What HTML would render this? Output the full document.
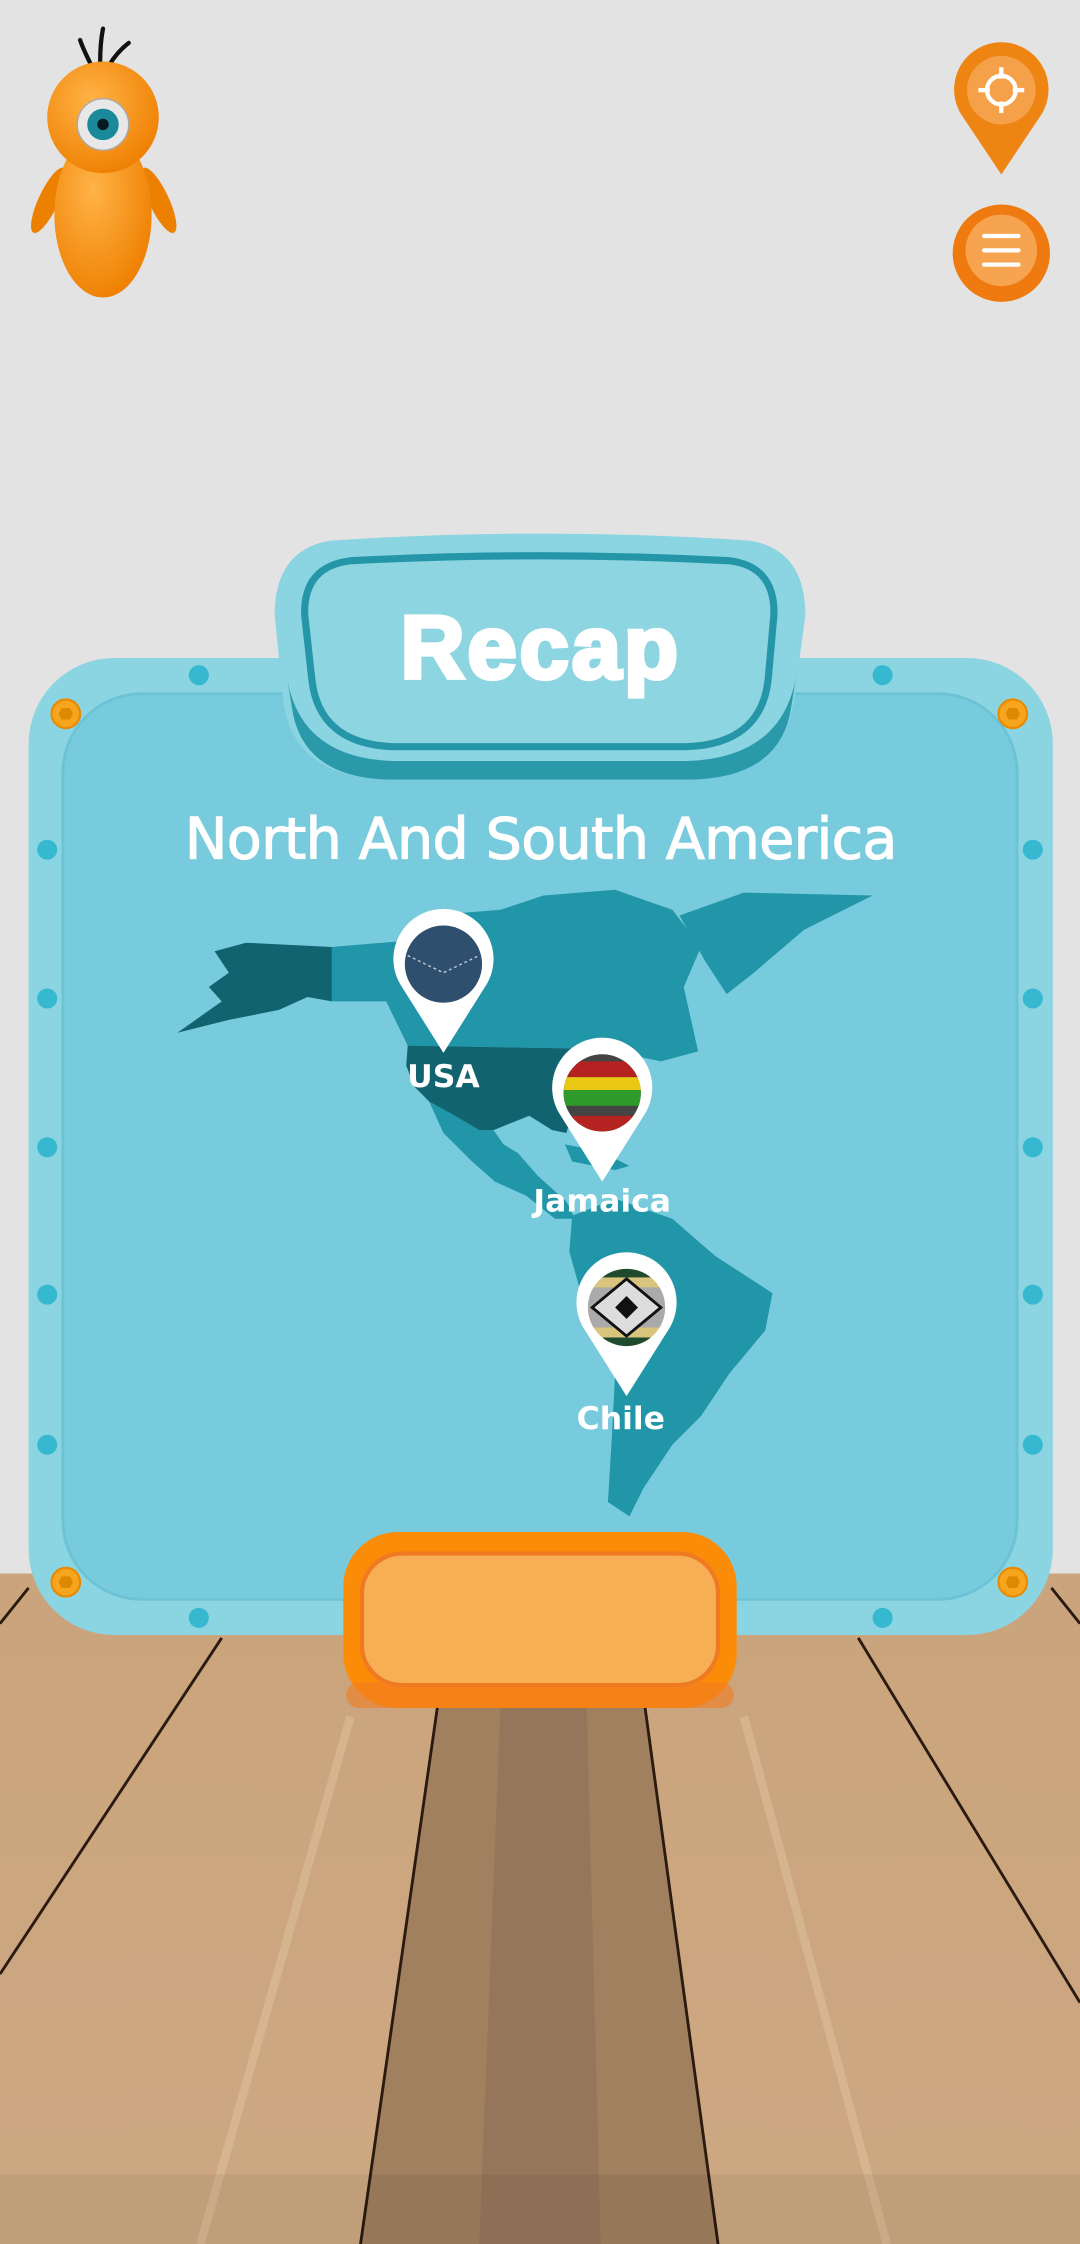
<!DOCTYPE html>
<html><head><meta charset="utf-8"><style>
html,body{margin:0;padding:0;background:#e4e4e4;}
svg{display:block}
</style></head><body>
<svg width="1080" height="2244" viewBox="0 0 755 1568.7" preserveAspectRatio="none" xmlns="http://www.w3.org/2000/svg">
<defs>
<linearGradient id="wood" x1="0" y1="0" x2="0" y2="1"><stop offset="0" stop-color="#c9a47c"/><stop offset="1" stop-color="#cda882"/></linearGradient>
<radialGradient id="orb" cx="0.4" cy="0.35" r="0.7"><stop offset="0" stop-color="#ffb347"/><stop offset="1" stop-color="#ee7f00"/></radialGradient>
<clipPath id="c1"><circle cx="310" cy="674" r="27"/></clipPath>
<clipPath id="c2"><circle cx="421" cy="764" r="27"/></clipPath>
<clipPath id="c3"><circle cx="438" cy="914" r="27"/></clipPath>
</defs>
<rect x="0" y="0" width="755" height="1100" fill="#e3e3e3"/>
<rect x="0" y="1100" width="755" height="469" fill="url(#wood)"/>
<polygon points="312,1150 445,1150 502,1569 252,1569" fill="#a0805f"/>
<polygon points="350,1190 410,1190 420,1569 335,1569" fill="#8d7058" opacity="0.6"/>
<g stroke="#2a1a10" stroke-width="2" fill="none">
<line x1="155" y1="1145" x2="0" y2="1380"/>
<line x1="312" y1="1150" x2="252" y2="1569"/>
<line x1="445" y1="1150" x2="502" y2="1569"/>
<line x1="600" y1="1145" x2="755" y2="1400"/>
<line x1="20" y1="1110" x2="0" y2="1135"/>
<line x1="735" y1="1110" x2="755" y2="1135"/>
</g>
<g stroke="#e0c4a0" stroke-width="6" opacity="0.5" fill="none">
<line x1="245" y1="1200" x2="140" y2="1569"/>
<line x1="520" y1="1200" x2="620" y2="1569"/>
</g>
<rect x="0" y="1520" width="755" height="49" fill="#000" opacity="0.06"/>

<g>
<path d="M64 46 Q58 34 56 28" stroke="#111" stroke-width="3" fill="none" stroke-linecap="round"/>
<path d="M70 44 Q70 30 72 20" stroke="#111" stroke-width="3" fill="none" stroke-linecap="round"/>
<path d="M76 46 Q82 36 90 30" stroke="#111" stroke-width="3" fill="none" stroke-linecap="round"/>
<ellipse cx="34" cy="140" rx="7" ry="25" transform="rotate(25 34 140)" fill="#ec8000"/>
<ellipse cx="111" cy="140" rx="7" ry="25" transform="rotate(-25 111 140)" fill="#ec8000"/>
<ellipse cx="72" cy="150" rx="34" ry="58" fill="url(#orb)"/>
<circle cx="72" cy="82" r="39" fill="url(#orb)"/>
<circle cx="72" cy="87" r="18" fill="#e8e8e8" stroke="#aaa" stroke-width="1"/>
<circle cx="72" cy="87" r="11" fill="#1a8a9a"/>
<circle cx="72" cy="87" r="4" fill="#0a1a20"/>
</g>

<path d="M700 122 L672 80 A33 33 0 1 1 728 80 Z" fill="#ee8411"/>
<circle cx="700" cy="63" r="24" fill="#f5a14a"/>
<circle cx="700" cy="63" r="10" fill="none" stroke="#fff" stroke-width="3"/>
<g stroke="#fff" stroke-width="3"><line x1="700" y1="47" x2="700" y2="55"/><line x1="700" y1="71" x2="700" y2="79"/><line x1="684" y1="63" x2="692" y2="63"/><line x1="708" y1="63" x2="716" y2="63"/></g>
<circle cx="700" cy="177" r="34" fill="#ee7a10"/>
<circle cx="700" cy="175" r="25" fill="#f6a450"/>
<g stroke="#fff" stroke-width="3" stroke-linecap="round"><line x1="688" y1="165" x2="712" y2="165"/><line x1="688" y1="175" x2="712" y2="175"/><line x1="688" y1="185" x2="712" y2="185"/></g>

<rect x="20" y="460" width="716" height="683" rx="60" fill="#8bd4e1"/>
<rect x="44" y="485" width="667" height="633" rx="55" fill="#77cbdc" stroke="#6cc3d5" stroke-width="2"/>
<g fill="#35b8d0">
<ellipse cx="139" cy="472" rx="7" ry="7"/><ellipse cx="617" cy="472" rx="7" ry="7"/>
<ellipse cx="139" cy="1131" rx="7" ry="7"/><ellipse cx="617" cy="1131" rx="7" ry="7"/>
<circle cx="33" cy="594" r="7"/><circle cx="33" cy="698" r="7"/><circle cx="33" cy="802" r="7"/><circle cx="33" cy="905" r="7"/><circle cx="33" cy="1010" r="7"/>
<circle cx="722" cy="594" r="7"/><circle cx="722" cy="698" r="7"/><circle cx="722" cy="802" r="7"/><circle cx="722" cy="905" r="7"/><circle cx="722" cy="1010" r="7"/>
</g>
<g fill="#f7a51c" stroke="#e98a00" stroke-width="1.5">
<circle cx="46" cy="499" r="10"/><circle cx="708" cy="499" r="10"/><circle cx="46" cy="1106" r="10"/><circle cx="708" cy="1106" r="10"/>
</g>
<g fill="#dd8a00"><polygon points="43,495 49,495 51,499 49,503 43,503 41,499"/><polygon points="705,495 711,495 713,499 711,503 705,503 703,499"/><polygon points="43,1102 49,1102 51,1106 49,1110 43,1110 41,1106"/><polygon points="705,1102 711,1102 713,1106 711,1110 705,1110 703,1106"/></g>

<path d="M230 378 Q378 368 525 378 Q563 385 563 430 L555 490 Q545 545 480 545 L275 545 Q205 545 198 490 L192 430 Q192 385 230 378 Z" fill="#8bd4e1"/>
<path d="M200 470 L205 500 Q215 545 275 545 L480 545 Q545 545 553 495 L557 470 Q548 530 480 532 L275 532 Q208 530 200 470Z" fill="#2a9aab"/>
<path d="M245 392 Q378 385 510 392 Q542 396 541 430 L537 475 Q532 520 480 522 L275 522 Q223 520 218 475 L213 430 Q212 396 245 392 Z" fill="#8dd5e0" stroke="#2596a8" stroke-width="5"/>
<text x="378" y="474" text-anchor="middle" font-family="Liberation Sans, sans-serif" font-weight="900" font-size="62" fill="#fff" stroke="#fff" stroke-width="3" letter-spacing="2">Recap</text>

<text x="378" y="600" text-anchor="middle" font-family="DejaVu Sans, Liberation Sans, sans-serif" font-size="40" fill="#fff" stroke="#fff" stroke-width="0.8" letter-spacing="-0.5">North And South America</text>

<g fill="#2096a8">
<polygon points="232,662 280,658 300,640 350,636 380,626 430,622 470,636 490,662 478,690 488,735 462,742 420,733 405,733 285,731 270,700 232,700"/>
<polygon points="475,640 520,624 610,626 562,650 527,680 508,695 493,672"/>
<polygon points="300,770 318,780 335,790 345,790 352,800 362,806 376,822 396,840 402,852 388,852 368,836 346,826 330,812 310,792"/>
<polygon points="400,850 430,838 470,852 500,878 540,904 535,930 510,960 490,990 470,1010 450,1040 440,1060 425,1050 428,1000 430,960 420,930 405,900 398,875"/>
<polygon points="395,800 420,805 440,815 430,818 400,812"/>
</g>
<g fill="#11636f">
<polygon points="150,665 172,659 232,662 232,700 215,697 195,706 160,713 124,722 155,700 146,690 160,680"/>
<polygon points="285,731 405,733 420,746 402,770 396,792 386,790 370,780 345,790 335,790 318,780 300,770 290,760 284,745"/>
</g>

<g>
<path d="M310 736 L281 690 A35 35 0 1 1 339 690 Z" fill="#fff"/>
<g clip-path="url(#c1)"><rect x="280" y="645" width="60" height="60" fill="#2f4f6e"/><path d="M285 668 L310 680 L335 668" stroke="#bcc8d6" stroke-width="1" stroke-dasharray="2 2" fill="none"/></g>
<text x="310" y="760" text-anchor="middle" font-family="DejaVu Sans, sans-serif" font-weight="bold" font-size="22" fill="#fff">USA</text>

<path d="M421 826 L392 780 A35 35 0 1 1 450 780 Z" fill="#fff"/>
<g clip-path="url(#c2)"><rect x="390" y="735" width="62" height="60" fill="#444"/><rect x="390" y="742" width="62" height="11" fill="#b52222"/><rect x="390" y="753" width="62" height="9" fill="#e8c813"/><rect x="390" y="762" width="62" height="11" fill="#2e9a2a"/><rect x="390" y="780" width="62" height="15" fill="#b52222"/></g>
<text x="421" y="847" text-anchor="middle" font-family="DejaVu Sans, sans-serif" font-weight="bold" font-size="22" fill="#fff">Jamaica</text>

<path d="M438 976 L409 930 A35 35 0 1 1 467 930 Z" fill="#fff"/>
<g clip-path="url(#c3)"><rect x="408" y="885" width="62" height="60" fill="#d8c47c"/><rect x="408" y="885" width="62" height="8" fill="#1e4a2e"/><rect x="408" y="935" width="62" height="10" fill="#1e4a2e"/><rect x="408" y="900" width="62" height="28" fill="#aaa"/><polygon points="438,894 462,914 438,934 414,914" fill="#ddd" stroke="#111" stroke-width="2"/><polygon points="438,906 446,914 438,922 430,914" fill="#111"/></g>
<text x="434" y="999" text-anchor="middle" font-family="DejaVu Sans, sans-serif" font-weight="bold" font-size="22" fill="#fff">Chile</text>
</g>

<rect x="240" y="1071" width="275" height="123" rx="38" fill="#fb8c08"/>
<rect x="242" y="1176" width="271" height="18" rx="9" fill="#f27b20" opacity="0.6"/>
<rect x="253" y="1086" width="249" height="92" rx="28" fill="#f7ae55" stroke="#f07a22" stroke-width="3"/>
</svg>
</body></html>
